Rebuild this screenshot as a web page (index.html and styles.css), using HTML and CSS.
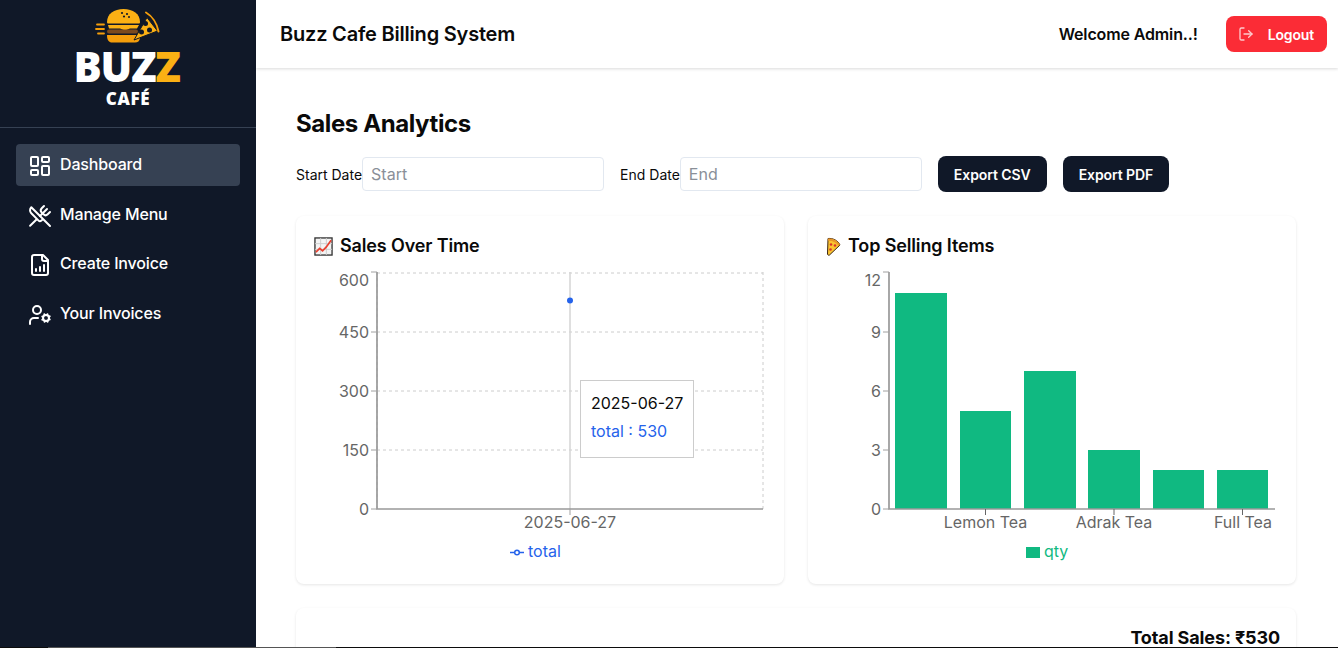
FILE: index.html
```html
<!DOCTYPE html>
<html lang="en">
<head>
  <meta charset="UTF-8" />
  <meta name="viewport" content="width=device-width, initial-scale=1.0"/>
  <title>Buzz Cafe Billing System</title>
  <link rel="stylesheet" href="styles.css">
</head>
<body>
  <div class="shell">
    <aside class="sidebar">
      <div class="logo">
        <svg class="logo-mark" viewBox="95 6 66 38" width="66" height="38">
          <!-- speed lines -->
          <path d="M97 24.500h7M96 29h8M98 33.500h6" stroke="#f59e0b" stroke-width="1.800" stroke-linecap="round" fill="none"/>
          <!-- burger -->
          <path d="M107 22c0-8 7-13 16.500-13S140 14 140 22c0 1-.5 1.500-1.500 1.500h-30c-1 0-1.500-.5-1.500-1.500z" fill="#fbb014"/>
          <circle cx="122" cy="13" r="1.100" fill="#101828"/><circle cx="127" cy="14" r="1.100" fill="#101828"/><circle cx="124" cy="16.500" r="1.100" fill="#101828"/><circle cx="129" cy="17" r="1" fill="#101828"/>
          <path d="M108 25h31l-2 3.500h-7l-5 2-5-2h-11z" fill="#fbb014"/>
          <rect x="107" y="29.500" width="31" height="4" rx="2" fill="#7c4a1e"/>
          <path d="M107 35h30l3 3c-.5 3-2 4.500-5 4.500h-23c-3 0-5-2-5-7.500z" fill="#f59e0b"/>
          <!-- pizza -->
          <path d="M134 40 147 17.500 157.500 31z" fill="#fbb014" stroke="#101828" stroke-width="1"/>
          <path d="M146 12.500c6 3.500 11 11 12.500 19" stroke="#f59e0b" stroke-width="2" fill="none" stroke-linecap="round"/>
          <circle cx="145.500" cy="23.500" r="2.500" fill="#101828"/><circle cx="141.500" cy="32" r="2.500" fill="#101828"/><circle cx="149.500" cy="30" r="2.500" fill="#101828"/>
        </svg>
        <div class="logo-name">BUZ<span class="logo-z">Z</span></div>
        <div class="logo-sub">CAFÉ</div>
      </div>
      <nav class="nav">
        <a class="nav-item active" href="#">
          <svg class="icon" viewBox="0 0 24 24"><rect width="7" height="9" x="3" y="3" rx="1"/><rect width="7" height="5" x="14" y="3" rx="1"/><rect width="7" height="9" x="14" y="12" rx="1"/><rect width="7" height="5" x="3" y="16" rx="1"/></svg>
          <span class="nav-label">Dashboard</span>
        </a>
        <a class="nav-item" href="#">
          <svg class="icon" viewBox="0 0 24 24"><path d="m16 2-2.300 2.300a3 3 0 0 0 0 4.200l1.800 1.800a3 3 0 0 0 4.200 0L22 8"/><path d="M15 15 3.300 3.300a4.200 4.200 0 0 0 0 6l7.300 7.300c.7.7 2 .7 2.800 0L15 15Zm0 0 7 7"/><path d="m2.100 21.800 6.400-6.300"/><path d="m19 5-7 7"/></svg>
          <span class="nav-label">Manage Menu</span>
        </a>
        <a class="nav-item" href="#">
          <svg class="icon" viewBox="0 0 24 24"><path d="M15 2H6a2 2 0 0 0-2 2v16a2 2 0 0 0 2 2h12a2 2 0 0 0 2-2V7Z"/><path d="M14 2v4a2 2 0 0 0 2 2h4"/><path d="M8 18v-2"/><path d="M12 18v-4"/><path d="M16 18v-6"/></svg>
          <span class="nav-label">Create Invoice</span>
        </a>
        <a class="nav-item" href="#">
          <svg class="icon" viewBox="0 0 24 24"><circle cx="18" cy="15" r="3"/><circle cx="9" cy="7" r="4"/><path d="M10 15H6a4 4 0 0 0-4 4v2"/><path d="m21.700 16.400-.9-.3"/><path d="m15.200 13.900-.9-.3"/><path d="m16.600 18.700.3-.9"/><path d="m19.100 12.200.3-.9"/><path d="m19.600 18.700-.4-1"/><path d="m16.800 12.300-.4-1"/><path d="m14.300 16.600 1-.4"/><path d="m20.700 13.800 1-.4"/></svg>
          <span class="nav-label">Your Invoices</span>
        </a>
      </nav>
    </aside>

    <div class="content">
      <header class="topbar">
        <h1 class="app-title">Buzz Cafe Billing System</h1>
        <div class="topbar-right">
          <span class="welcome">Welcome Admin..!</span>
          <button class="logout">
            <svg class="icon-small" viewBox="0 0 24 24"><path d="M9 21H5a2 2 0 0 1-2-2V5a2 2 0 0 1 2-2h4"/><polyline points="16 17 21 12 16 7"/><line x1="21" x2="9" y1="12" y2="12"/></svg>
            Logout
          </button>
        </div>
      </header>

      <main class="main">
        <h2 class="page-title">Sales Analytics</h2>

        <div class="filters">
          <label class="field">Start Date<input type="text" placeholder="Start"></label>
          <label class="field">End Date<input type="text" placeholder="End"></label>
          <button class="btn">Export CSV</button>
          <button class="btn">Export PDF</button>
        </div>

        <div class="charts">
          <section class="card">
            <h3 class="card-title">
              <svg class="emoji" viewBox="0 0 20 20">
                <rect x="1" y="1" width="18" height="18" fill="#f4f4f4" stroke="#333" stroke-width="1.400"/>
                <path d="M1 7h18M1 13h18M7 1v18M13 1v18" stroke="#ccc" stroke-width="1"/>
                <path d="M2 16l4-4 3 2.500 4-4 5-7" stroke="#e8402f" stroke-width="1.800" fill="none"/>
              </svg>
              Sales Over Time
            </h3>
            <div class="chart">
              <svg viewBox="312 264 456 304" width="456" height="304">
                <path class="grid" d="M377 273H763M377 332H763M377 391H763M377 450H763M377 272V509M763 272V509"/>
                <path class="cursor" d="M570 272V509"/>
                <path class="axis" d="M377 272V509H763"/>
                <path class="tick" d="M371 272H377M371 332H377M371 391H377M371 450H377M371 509H377M570 509V515"/>
                <text class="tick-y" x="369" y="286">600</text>
                <text class="tick-y" x="369" y="338">450</text>
                <text class="tick-y" x="369" y="397">300</text>
                <text class="tick-y" x="369" y="456">150</text>
                <text class="tick-y" x="369" y="515">0</text>
                <text class="tick-x" x="570" y="528">2025-06-27</text>
                <circle class="dot" cx="570" cy="300.500" r="3"/>
                <path class="legend-line" d="M510 552.500H524"/>
                <circle class="legend-dot" cx="517" cy="552.500" r="2.300"/>
                <text class="legend-total" x="528" y="557">total</text>
              </svg>
              <div class="tooltip">
                <div class="tooltip-label">2025-06-27</div>
                <div class="tooltip-value">total : 530</div>
              </div>
            </div>
          </section>

          <section class="card">
            <h3 class="card-title">
              <svg class="emoji emoji-narrow" viewBox="0 0 15 19">
                <path d="M2 1.500c5-.5 10 2 12 6.500L3.500 18c-1 .5-2 0-2-1z" fill="#fbc531" stroke="#3a2410" stroke-width="1"/>
                <path d="M2 1.500c5-.5 10 2 12 6.500l-1.500 1C10.500 5.500 6.500 3.500 1.800 3.800z" fill="#e8962a"/>
                <circle cx="5" cy="7.500" r="1.300" fill="#d9352a"/><circle cx="9" cy="8.500" r="1.300" fill="#d9352a"/><circle cx="4.500" cy="12.500" r="1.300" fill="#d9352a"/>
              </svg>
              Top Selling Items
            </h3>
            <div class="chart">
              <svg viewBox="824 264 456 304" width="456" height="304">
                <rect class="bar" x="895" y="293" width="52" height="216"/>
                <rect class="bar" x="960" y="411" width="51" height="98"/>
                <rect class="bar" x="1024" y="371" width="52" height="138"/>
                <rect class="bar" x="1088" y="450" width="52" height="59"/>
                <rect class="bar" x="1153" y="470" width="51" height="39"/>
                <rect class="bar" x="1217" y="470" width="51" height="39"/>
                <path class="axis" d="M889 272V509H1275"/>
                <path class="tick" d="M883 272H889M883 332H889M883 391H889M883 450H889M883 509H889"/>
                <path class="tick-dark" d="M985.500 509V515M1114 509V515M1242.500 509V515"/>
                <text class="tick-y" x="881" y="286">12</text>
                <text class="tick-y" x="881" y="338">9</text>
                <text class="tick-y" x="881" y="397">6</text>
                <text class="tick-y" x="881" y="456">3</text>
                <text class="tick-y" x="881" y="515">0</text>
                <text class="tick-x" x="985.500" y="528">Lemon Tea</text>
                <text class="tick-x" x="1114" y="528">Adrak Tea</text>
                <text class="tick-x" x="1243" y="528">Full Tea</text>
                <rect class="bar" x="1026" y="547" width="14" height="11"/>
                <text class="legend-qty" x="1044" y="557">qty</text>
              </svg>
            </div>
          </section>
        </div>

        <section class="card total-card">Total Sales: ₹530</section>
      </main>
    </div>
  </div>
  <div class="window-edge"></div>
</body>
</html>
```

FILE: styles.css
```css
* {
  box-sizing: border-box;
}
html, body {
  height: 100%;
}
body {
  margin: 0;
  overflow: hidden;
  font-family: "Inter", "Liberation Sans", sans-serif;
  color: #0a0a0a;
  background: white;
}
.shell {
  display: flex;
  height: 100vh;
}

/* sidebar */
.sidebar {
  width: 256px;
  flex-shrink: 0;
  background: #101828;
  color: white;
}
.logo {
  height: 128px;
  display: flex;
  flex-direction: column;
  align-items: center;
  padding-top: 6px;
  border-bottom: 1px solid #364153;
}
.logo-mark {
  display: block;
}
.logo-name {
  font-family: "Open Sans", sans-serif;
  font-weight: 800;
  font-size: 42px;
  line-height: 38px;
  letter-spacing: -1.4px;
  margin-top: 3px;
  margin-right: 3px;
}
.logo-z {
  color: #fbb014;
}
.logo-sub {
  font-family: "Open Sans", sans-serif;
  font-weight: 800;
  font-size: 17px;
  line-height: 20px;
  letter-spacing: 0.6px;
  margin-top: 4px;
}
.nav {
  display: flex;
  flex-direction: column;
  gap: 7.6px;
  padding: 16px;
}
.nav-item {
  display: flex;
  align-items: center;
  gap: 8px;
  height: 42px;
  padding: 0 12px;
  border-radius: 4px;
  color: white;
  text-decoration: none;
  font-size: 16px;
  font-weight: 500;
  letter-spacing: -0.15px;
}
.nav-item.active {
  background: #364153;
}
.nav-label {
  padding-bottom: 2px;
}
.icon, .icon-small {
  fill: none;
  stroke: currentColor;
  stroke-width: 2;
  stroke-linecap: round;
  stroke-linejoin: round;
  flex-shrink: 0;
}
.icon {
  width: 24px;
  height: 24px;
  margin-top: 2px;
}
.icon-small {
  width: 16px;
  height: 16px;
  opacity: 0.75;
}

/* top bar */
.content {
  flex: 1;
  min-width: 0;
  display: flex;
  flex-direction: column;
}
.topbar {
  height: 68px;
  flex-shrink: 0;
  display: flex;
  align-items: center;
  justify-content: space-between;
  padding: 0 11px 0 24px;
  box-shadow: 0 1px 3px rgba(0, 0, 0, 0.15);
}
.app-title {
  margin: 0;
  font-size: 20px;
  font-weight: 600;
  letter-spacing: -0.2px;
}
.topbar-right {
  display: flex;
  align-items: center;
  gap: 28px;
}
.welcome {
  font-size: 16px;
  font-weight: 600;
  letter-spacing: -0.13px;
}
.logout {
  display: flex;
  align-items: center;
  gap: 14px;
  height: 36px;
  padding: 0 13px 0 12px;
  border: none;
  border-radius: 8px;
  background: #fb2c36;
  color: white;
  font: 600 14px "Inter", sans-serif;
  letter-spacing: -0.15px;
}

/* main area */
.main {
  padding: 40px 42px 0 40px;
}
.page-title {
  margin: 0 0 16px;
  font-size: 24px;
  line-height: 32px;
  font-weight: 700;
  letter-spacing: -0.4px;
}
.filters {
  display: flex;
  align-items: center;
  gap: 16px;
  margin-bottom: 24px;
}
.field {
  display: flex;
  align-items: center;
  font-size: 14px;
}
.field input {
  width: 242px;
  height: 34px;
  padding: 0 8px;
  border: 1px solid #e2e8f0;
  border-radius: 4px;
  font: 16px "Inter", sans-serif;
}
.field input::placeholder {
  color: #8a8f98;
}
.btn {
  height: 36px;
  padding: 0 16px;
  border: none;
  border-radius: 8px;
  background: #101828;
  color: white;
  font: 600 14px "Inter", sans-serif;
  letter-spacing: -0.08px;
}
.charts {
  display: grid;
  grid-template-columns: 1fr 1fr;
  gap: 24px;
  margin-bottom: 24px;
}
.card {
  padding: 16px;
  border-radius: 8px;
  background: white;
  box-shadow: 0 1px 3px rgba(0, 0, 0, 0.1);
}
.card-title {
  display: flex;
  align-items: center;
  gap: 7px;
  margin: 0 0 4px;
  padding-left: 2px;
  font-size: 18px;
  line-height: 28px;
  font-weight: 600;
  letter-spacing: -0.14px;
}
.emoji {
  width: 19px;
  height: 19px;
}
.emoji-narrow {
  width: 15px;
}
.total-card {
  text-align: right;
  font-size: 18px;
  line-height: 28px;
  font-weight: 700;
  letter-spacing: -0.12px;
}

/* charts */
.chart {
  position: relative;
  height: 304px;
}
.chart svg {
  display: block;
}
.grid {
  fill: none;
  stroke: #ccc;
  stroke-dasharray: 3 3;
}
.cursor {
  stroke: #d4d4d4;
  stroke-width: 1.500;
}
.axis {
  fill: none;
  stroke: #999;
  stroke-width: 1.700;
}
.tick {
  fill: none;
  stroke: #a0a0a0;
}
.tick-dark {
  fill: none;
  stroke: #666;
}
.tick-y, .tick-x {
  font-size: 16px;
  fill: #666;
}
.tick-y {
  text-anchor: end;
}
.tick-x {
  text-anchor: middle;
}
.bar {
  fill: #10b981;
}
.dot {
  fill: #2563eb;
}
.legend-line {
  stroke: #2563eb;
  stroke-width: 1.500;
}
.legend-dot {
  fill: white;
  stroke: #2563eb;
  stroke-width: 1.500;
}
.legend-total {
  font-size: 16px;
  fill: #2563eb;
}
.legend-qty {
  font-size: 16px;
  fill: #10b981;
}
.tooltip {
  position: absolute;
  left: 268px;
  top: 116px;
  width: 114px;
  height: 78px;
  padding: 10px;
  border: 1px solid #ccc;
  background: white;
  font-size: 16px;
  white-space: nowrap;
}
.tooltip-label {
  line-height: 24px;
  margin-bottom: 4px;
}
.tooltip-value {
  line-height: 24px;
  color: #2563eb;
}

.window-edge {
  position: fixed;
  left: 0;
  right: 0;
  bottom: 0;
  height: 1px;
  background: linear-gradient(to right, #0c0c0c 48px, #555 48px, #555 336px, #0c0c0c 336px);
}
```
